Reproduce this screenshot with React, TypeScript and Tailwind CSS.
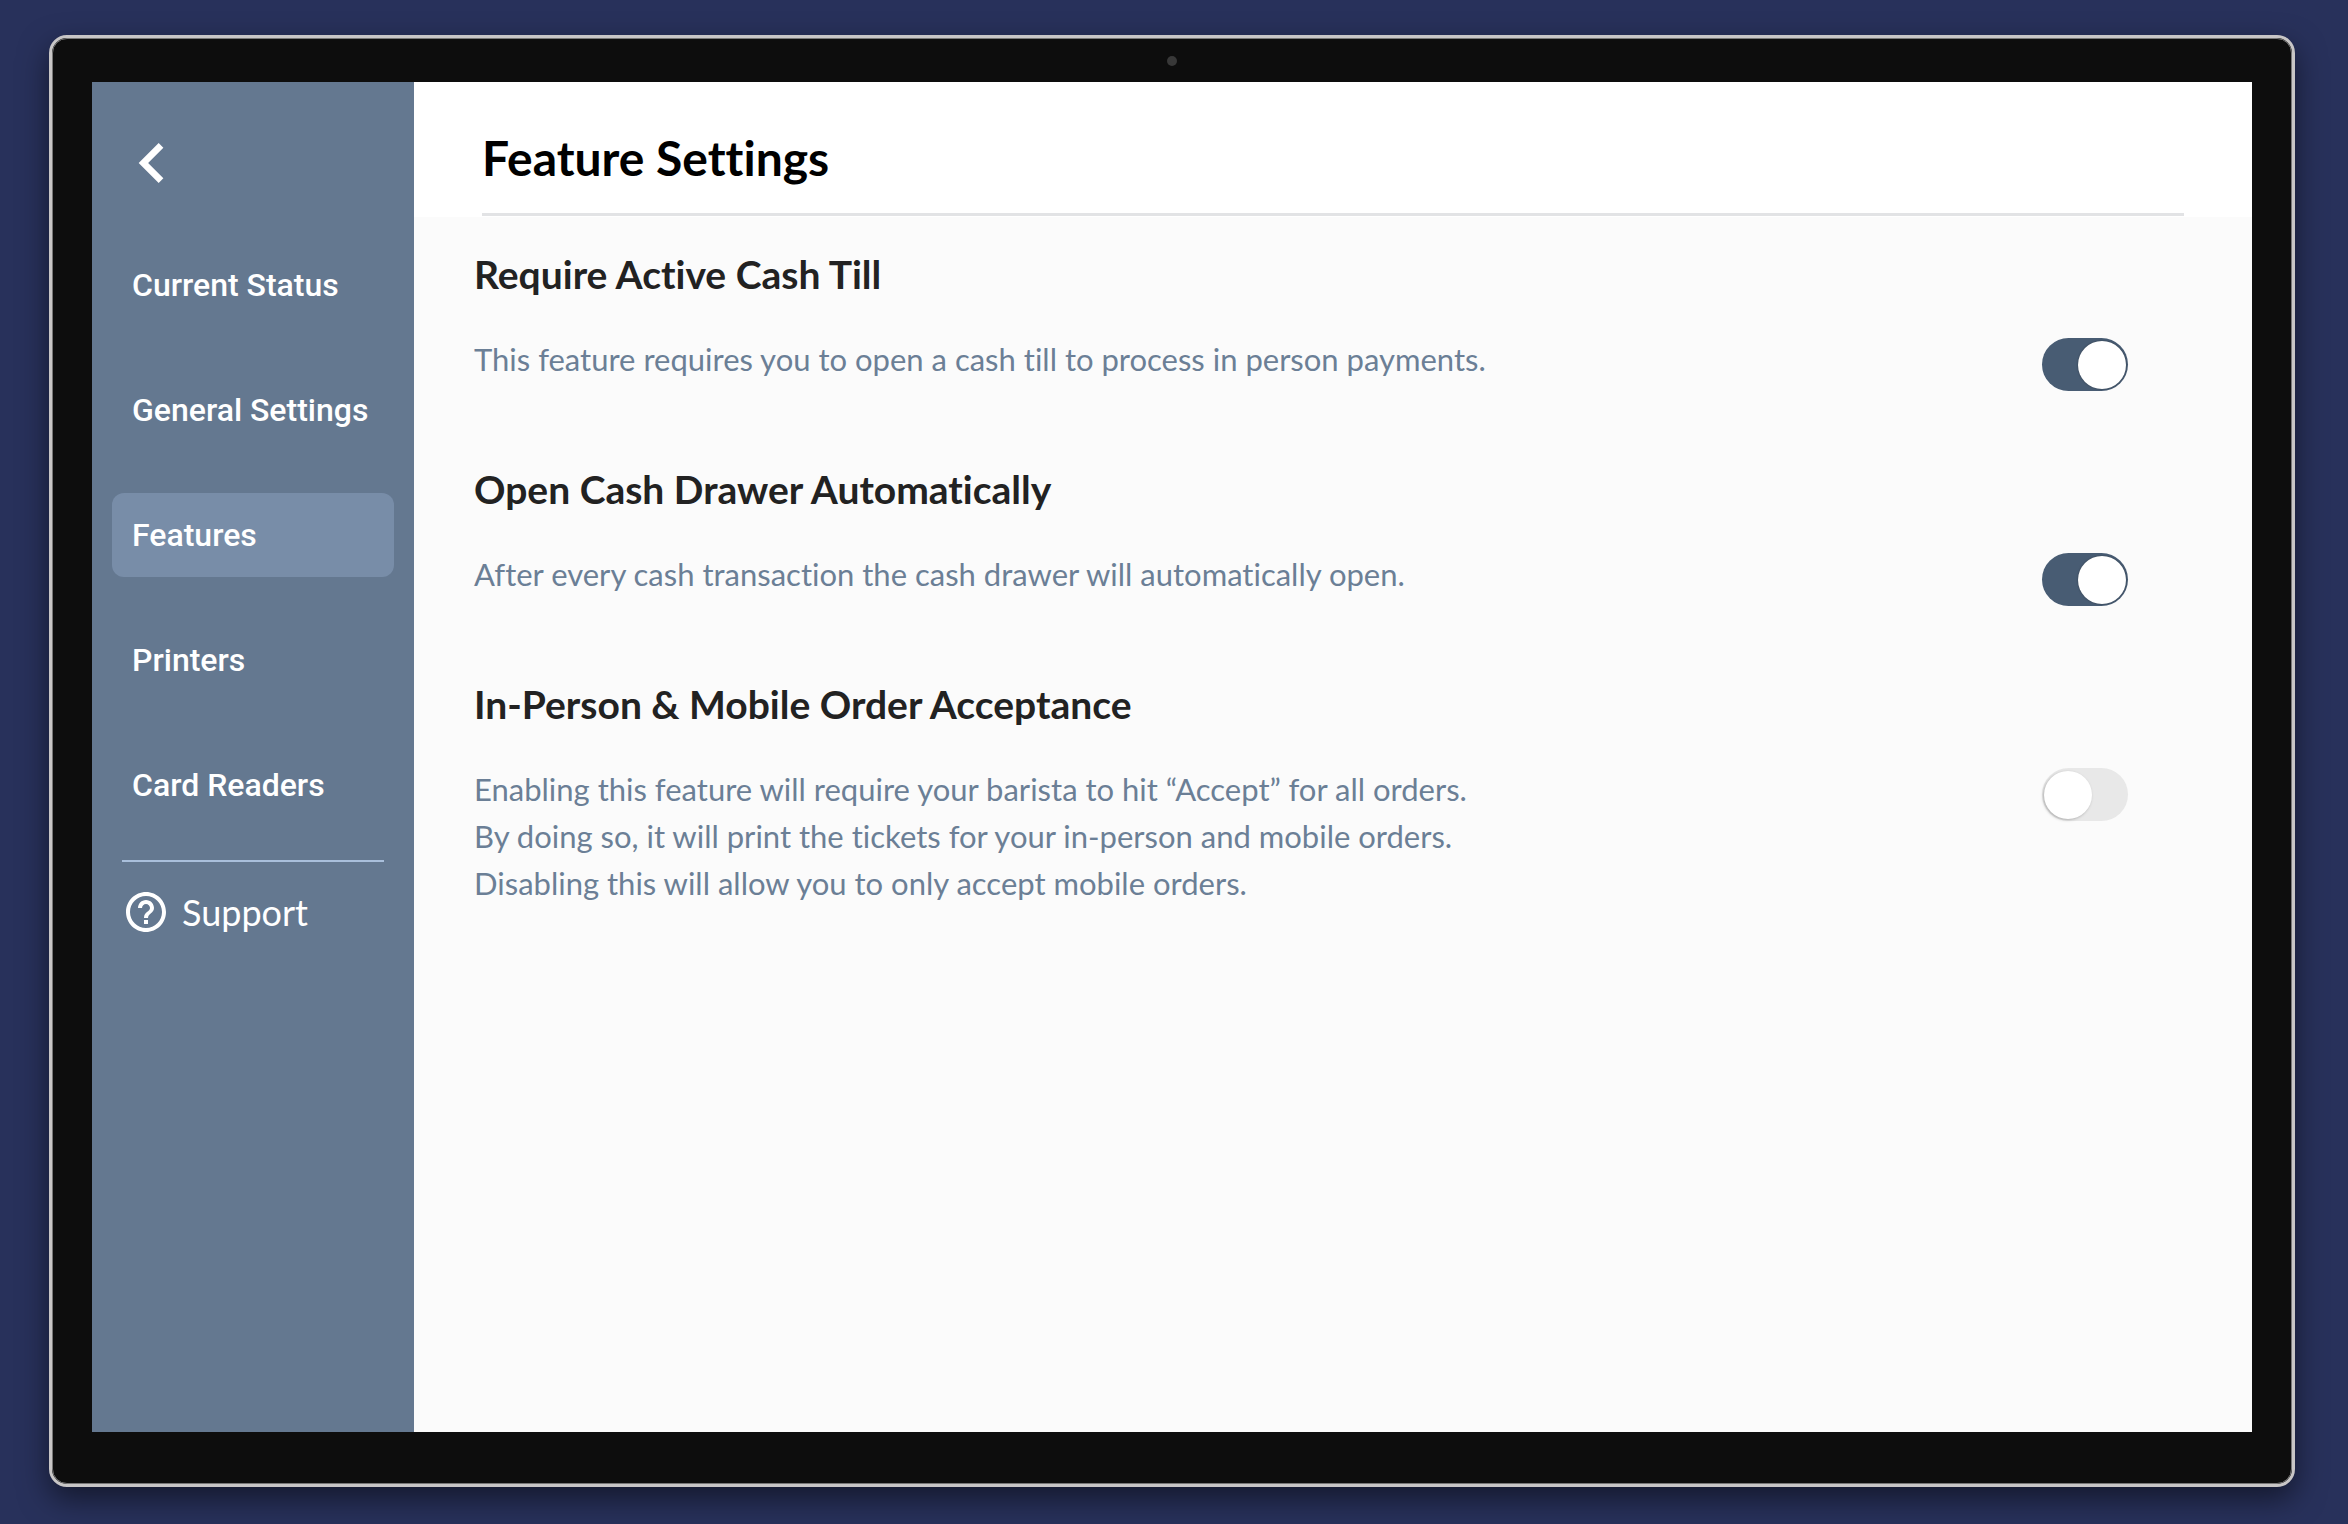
import React, { useState } from 'react';
import { MdChevronLeft, MdHelpOutline } from 'react-icons/md';

const navItems = ['Current Status', 'General Settings', 'Features', 'Printers', 'Card Readers'];

const features = [
  {
    id: 'cash-till',
    title: 'Require Active Cash Till',
    lines: ['This feature requires you to open a cash till to process in person payments.'],
    enabled: true,
  },
  {
    id: 'cash-drawer',
    title: 'Open Cash Drawer Automatically',
    lines: ['After every cash transaction the cash drawer will automatically open.'],
    enabled: true,
  },
  {
    id: 'order-acceptance',
    title: 'In-Person & Mobile Order Acceptance',
    lines: [
      'Enabling this feature will require your barista to hit “Accept” for all orders.',
      'By doing so, it will print the tickets for your in-person and mobile orders.',
      'Disabling this will allow you to only accept mobile orders.',
    ],
    enabled: false,
  },
];

type ToggleProps = {
  id: string;
  checked: boolean;
  onChange: () => void;
};

const Toggle: React.FC<ToggleProps> = ({ id, checked, onChange }) => (
  <input
    id={id}
    type="checkbox"
    role="switch"
    checked={checked}
    onChange={onChange}
    className="mt-0.5 flex h-[53px] w-[86px] shrink-0 cursor-pointer appearance-none items-center rounded-full bg-[#e8e8e8] px-[2px] before:block before:size-12 before:rounded-full before:bg-white before:shadow-[-1px_1px_3px_rgba(0,0,0,0.25)] before:content-[''] checked:justify-end checked:bg-[#485c73] checked:before:shadow-[0_0_2px_rgba(0,0,0,0.4)]"
  />
);

const Sidebar: React.FC = () => (
  <aside className="flex w-[322px] shrink-0 flex-col bg-[#647890] px-5 pt-[41px] text-white">
    <button type="button" aria-label="Back" className="size-20">
      <MdChevronLeft className="size-20" />
    </button>

    <nav className="mt-10 flex flex-col gap-[41px]">
      {navItems.map((item) => (
        <a
          key={item}
          href={`#${item.toLowerCase().replace(' ', '-')}`}
          className={`flex h-[84px] items-center rounded-xl px-5 font-[Roboto,sans-serif] text-[32px] font-medium whitespace-nowrap ${
            item === 'Features' ? 'bg-[#788da8]' : ''
          }`}
        >
          {item}
        </a>
      ))}
    </nav>

    <hr className="mx-[10px] mt-[33px] border-t-2 border-[#a9bfdb]" />

    <a href="#support" className="mx-[10px] mt-[26px] flex items-center gap-3 text-[36px] leading-[48px]">
      <MdHelpOutline className="size-12" />
      Support
    </a>
  </aside>
);

const App: React.FC = () => {
  const [enabled, setEnabled] = useState(features.map((feature) => feature.enabled));

  const toggle = (index: number) =>
    setEnabled(enabled.map((value, i) => (i === index ? !value : value)));

  return (
    <div className="flex min-h-screen flex-col bg-[#28315b] pt-[35px] pr-[53px] pb-[37px] pl-[49px] font-[Lato,sans-serif] [font-variant-ligatures:none]">
      {/* --- Device frame --- */}
      <div className="flex flex-1 flex-col rounded-[18px] border-[3px] border-[#c8c6c6] bg-[#0d0d0d] shadow-[0_12px_30px_rgba(0,0,0,0.5)]">
        <div className="flex flex-1 flex-col rounded-[15px] border border-[#777777] px-[39px] pb-[51px]">
          <div className="flex h-[43px] items-center justify-center">
            <span className="size-[10px] rounded-full bg-[#383838]" />
          </div>

          {/* --- Screen --- */}
          <div className="flex flex-1">
            <Sidebar />

            <main className="flex-1 bg-[#fbfbfb]">
              <header className="bg-white px-[68px] pb-px">
                <h1 className="border-b-[3px] border-[#e2e3e5] pt-12 pb-[27px] text-[48px] leading-[56px] font-bold text-black">
                  Feature Settings
                </h1>
              </header>

              <div className="flex flex-col gap-[74px] pt-[33px] pr-[124px] pb-10 pl-[60px]">
                {features.map((feature, index) => (
                  <section key={feature.id}>
                    <h2 className="text-[39px] leading-[48px] font-bold text-[#222222]">
                      <label htmlFor={feature.id}>{feature.title}</label>
                    </h2>
                    <div className="mt-[38px] flex items-start justify-between gap-10">
                      <p className="text-[31px] leading-[47px] text-[#6b7f96]">
                        {feature.lines.map((line) => (
                          <span key={line} className="block">
                            {line}
                          </span>
                        ))}
                      </p>
                      <Toggle id={feature.id} checked={enabled[index]} onChange={() => toggle(index)} />
                    </div>
                  </section>
                ))}
              </div>
            </main>
          </div>
        </div>
      </div>
    </div>
  );
};

export default App;
